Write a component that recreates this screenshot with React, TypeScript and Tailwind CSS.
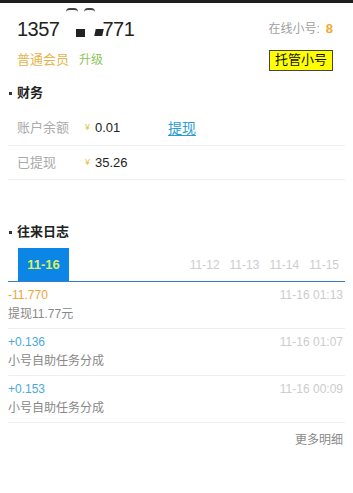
const font = { fontFamily: '"Liberation Sans", "Noto Sans CJK SC", sans-serif' }

const logs = [
  { amount: '-11.770', time: '11-16 01:13', note: '提现11.77元', minus: true },
  { amount: '+0.136', time: '11-16 01:07', note: '小号自助任务分成', minus: false },
  { amount: '+0.153', time: '11-16 00:09', note: '小号自助任务分成', minus: false },
]

const days = ['11-12', '11-13', '11-14', '11-15']

function SectionTitle({ title }: { title: string }) {
  return (
    <div className="flex items-center h-[20px] pl-[9px]">
      <span className="w-[3px] h-[3px] bg-[#333] mr-[5px]" />
      <span className="text-[13px] font-bold text-[#222]">{title}</span>
    </div>
  )
}

export default function App() {
  return (
    <div className="w-[353px] h-[493px] bg-white overflow-hidden" style={font}>
      <div className="h-[3px] bg-[#1e1e1e]" />

      <div className="px-[17px] pr-[20px]">
        <div className="flex items-center justify-between h-[26px] mt-[13px]">
          <div className="relative flex items-center text-[20px] text-[#222] leading-none tracking-[-0.5px]">
            <span>1357</span>
            <span className="w-[16px]" />
            <span className="w-[9px] h-[8px] bg-[#222] mt-[8px]" />
            <span className="w-[10px]" />
            <span className="w-[8px] h-[7px] bg-[#222] mt-[6px] -skew-x-12" />
            <span>771</span>
            <span className="absolute left-[49px] top-[-11px] w-[12px] h-[4px] rounded-t-full border-t-2 border-[#444]" />
            <span className="absolute left-[67px] top-[-11px] w-[11px] h-[4px] rounded-t-full border-t-2 border-[#444]" />
          </div>
          <div className="text-[12px] text-[#a0a0a0] flex items-center">
            在线小号:
            <span className="ml-[6px] text-[#f0a830] font-bold text-[13px]">8</span>
          </div>
        </div>

        <div className="flex items-center justify-between h-[22px] mt-[7px]">
          <div className="flex items-center">
            <span className="text-[13px] text-[#e6b44a]">普通会员</span>
            <span className="ml-[10px] text-[12px] text-[#8cc45a]">升级</span>
          </div>
          <div className="h-[21px] px-[5px] flex items-center bg-[#ffff00] border border-[#444] text-[13px] text-[#111]">
            托管小号
          </div>
        </div>
      </div>

      <div className="mt-[12px]">
        <SectionTitle title="财务" />
      </div>

      <div className="mx-[8px] mt-[8px]">
        <div className="flex items-center h-[35px] border-b border-[#efefef] pl-[9px]">
          <span className="w-[68px] text-[13px] text-[#aaa]">账户余额</span>
          <span className="text-[9px] text-[#e8c040] mr-[5px]">¥</span>
          <span className="w-[73px] text-[13px] text-[#222]">0.01</span>
          <span className="text-[14px] text-[#2a9cd4] underline underline-offset-2">提现</span>
        </div>
        <div className="flex items-center h-[34px] border-b border-[#efefef] pl-[9px]">
          <span className="w-[68px] text-[13px] text-[#aaa]">已提现</span>
          <span className="text-[9px] text-[#e8c040] mr-[5px]">¥</span>
          <span className="text-[13px] text-[#222]">35.26</span>
        </div>
      </div>

      <div className="mt-[42px]">
        <SectionTitle title="往来日志" />
      </div>

      <div className="mx-[8px] mt-[6px] flex items-end border-b-[1.5px] border-[#3a7ec0]">
        <div className="ml-[10px] w-[51px] h-[33px] bg-[#0b86e6] flex items-center justify-center text-[13px] font-bold text-[#d8f25c]">
          11-16
        </div>
        <div className="flex-1 flex justify-end items-center h-[33px] pr-[6px] text-[12px] text-[#cdcdcd] gap-[10px]">
          {days.map((d) => (
            <span key={d}>{d}</span>
          ))}
        </div>
      </div>

      <div className="mx-[8px]">
        {logs.map((l) => (
          <div key={l.time} className="h-[47px] border-b border-[#efefef] pt-[5px]">
            <div className="flex items-center justify-between h-[16px]">
              <span className={`text-[12px] ${l.minus ? 'text-[#e8a640]' : 'text-[#4aa8d8]'}`}>{l.amount}</span>
              <span className="text-[12px] text-[#cccccc] pr-[2px]">{l.time}</span>
            </div>
            <div className="flex items-center h-[18px] mt-[2px] text-[12px] text-[#888]">{l.note}</div>
          </div>
        ))}
        <div className="flex justify-end items-center h-[18px] mt-[8px] pr-[2px] text-[12px] text-[#888]">更多明细</div>
      </div>
    </div>
  )
}
